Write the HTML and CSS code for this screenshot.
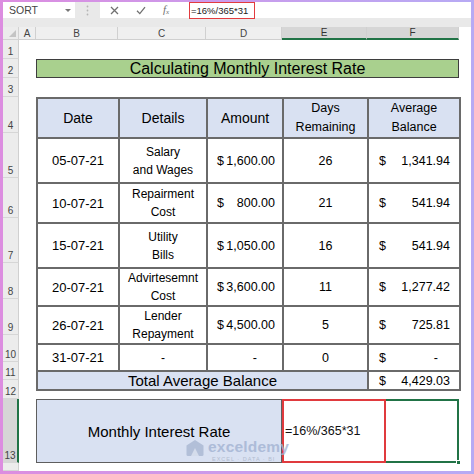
FILE: index.html
```html
<!DOCTYPE html>
<html lang="en">
<head>
<meta charset="utf-8">
<title>Calculating Monthly Interest Rate</title>
<link rel="stylesheet" href="styles.css">
</head>
<body>
<div class="frame">
  <div class="fbar">
    <div class="namebox"><span class="name">SORT</span><span class="caret"></span></div>
    <div class="grip">
      <svg width="3" height="11" viewBox="0 0 3 11"><circle cx="1.5" cy="1.5" r="0.9"/><circle cx="1.5" cy="5.5" r="0.9"/><circle cx="1.5" cy="9.5" r="0.9"/></svg>
    </div>
    <div class="finput">
      <div class="btns">
        <svg class="ic" width="9" height="9" viewBox="0 0 9 9"><path d="M1 1L8 8M8 1L1 8"/></svg>
        <svg class="ic" width="10" height="9" viewBox="0 0 10 9"><path d="M1 4.8L3.8 7.6L9 1.2"/></svg>
        <span class="fx"><i>f</i><sub>x</sub></span>
      </div>
      <div class="formula">=16%/365*31</div>
    </div>
  </div>

  <div class="sheet">
    <div class="corner"><span class="tri"></span></div>
    <div class="ch">A</div>
    <div class="ch">B</div>
    <div class="ch">C</div>
    <div class="ch">D</div>
    <div class="ch sel">E</div>
    <div class="ch sel">F</div>
    <div class="ch blank"></div>

    <div class="rh">1</div>
    <div class="rh">2</div>
    <div class="rh">3</div>
    <div class="rh">4</div>
    <div class="rh">5</div>
    <div class="rh">6</div>
    <div class="rh">7</div>
    <div class="rh">8</div>
    <div class="rh">9</div>
    <div class="rh">10</div>
    <div class="rh">11</div>
    <div class="rh">12</div>
    <div class="rh rsel">13</div>
    <div class="rh"></div>

    <div class="title">Calculating Monthly Interest Rate</div>

    <table class="data">
      <colgroup><col class="cb"><col class="cc"><col class="cd"><col class="ce"><col class="cf"></colgroup>
      <tr class="hd">
        <th>Date</th><th>Details</th><th>Amount</th>
        <th class="two">Days<br>Remaining</th><th class="two">Average<br>Balance</th>
      </tr>
      <tr class="r45">
        <td class="date">05-07-21</td><td class="det">Salary<br>and Wages</td>
        <td><div class="acc amt"><span>$</span><span>1,600.00</span></div></td>
        <td class="num">26</td>
        <td><div class="acc avg"><span>$</span><span>1,341.94</span></div></td>
      </tr>
      <tr class="r40">
        <td class="date">10-07-21</td><td class="det">Repairment<br>Cost</td>
        <td><div class="acc amt"><span>$</span><span>800.00</span></div></td>
        <td class="num">21</td>
        <td><div class="acc avg"><span>$</span><span>541.94</span></div></td>
      </tr>
      <tr class="r45">
        <td class="date">15-07-21</td><td class="det">Utility<br>Bills</td>
        <td><div class="acc amt"><span>$</span><span>1,050.00</span></div></td>
        <td class="num">16</td>
        <td><div class="acc avg"><span>$</span><span>541.94</span></div></td>
      </tr>
      <tr class="r36">
        <td class="date">20-07-21</td><td class="det">Advirtesemnt<br>Cost</td>
        <td><div class="acc amt"><span>$</span><span>3,600.00</span></div></td>
        <td class="num">11</td>
        <td><div class="acc avg"><span>$</span><span>1,277.42</span></div></td>
      </tr>
      <tr class="r36">
        <td class="date">26-07-21</td><td class="det">Lender<br>Repayment</td>
        <td><div class="acc amt"><span>$</span><span>4,500.00</span></div></td>
        <td class="num">5</td>
        <td><div class="acc avg"><span>$</span><span>725.81</span></div></td>
      </tr>
      <tr class="r27">
        <td class="date">31-07-21</td><td class="det">-</td>
        <td><div class="acc amt zero"><span></span><span>-</span></div></td>
        <td class="num">0</td>
        <td><div class="acc avg zero"><span>$</span><span>-</span></div></td>
      </tr>
      <tr class="r18">
        <td colspan="4" class="tot">Total Average Balance</td>
        <td class="totv"><div class="acc avg"><span>$</span><span>4,429.03</span></div></td>
      </tr>
    </table>

    <div class="bottom">
      <div class="label">Monthly Interest Rate</div>
      <div class="value">=16%/365*31<span class="handle"></span></div>
      <div class="redbox"></div>
    </div>
  </div>

  <div class="watermark">
    <svg class="wlogo" width="20" height="18" viewBox="0 0 20 18">
      <path d="M10 1L18.5 6.5V15.5Q18.5 17 17 17H3Q1.5 17 1.5 15.5V6.5Z"/>
      <path class="inner" d="M6 17L10 9L14 17Z"/>
    </svg>
    <div class="wtext">
      <span class="wname">exceldemy</span>
      <span class="wsub">EXCEL · DATA · BI</span>
    </div>
  </div>
</div>
</body>
</html>
```

FILE: styles.css
```css
* { box-sizing: border-box; margin: 0; padding: 0; }

html, body {
  width: 474px;
  height: 474px;
  overflow: hidden;
  background: #ffffff;
}

body {
  font-family: "Liberation Sans", Arial, sans-serif;
  color: #000;
}

.frame {
  position: relative;
  width: 474px;
  height: 474px;
  border-style: solid;
  border-width: 2px 3px 3px 3px;
  border-image: linear-gradient(90deg, #dc8de0, #c99cec 50%, #b7aaf4) 1;
  display: flex;
  flex-direction: column;
  background: #fff;
}

/* ---------- formula bar ---------- */
.fbar {
  height: 25px;
  flex: none;
  background: #e9e9e9;
  display: flex;
  align-items: flex-start;
}

.namebox {
  width: 72px;
  height: 16px;
  margin-top: 0;
  background: #fff;
  display: flex;
  align-items: center;
  justify-content: space-between;
  padding: 0 4px 0 6px;
}

.name {
  font-size: 10.5px;
  color: #444;
}

.caret {
  width: 0;
  height: 0;
  border-left: 3px solid transparent;
  border-right: 3px solid transparent;
  border-top: 3px solid #777;
}

.grip {
  width: 25px;
  height: 16px;
  display: flex;
  align-items: center;
  justify-content: center;
}

.grip svg { fill: #b5b5b5; }

.finput {
  flex: 1;
  height: 16px;
  background: #fff;
  display: flex;
  align-items: stretch;
}

.btns {
  width: 86px;
  display: flex;
  align-items: center;
  padding-left: 10px;
  gap: 17px;
}

.ic {
  fill: none;
  stroke: #707070;
  stroke-width: 1.3;
}

.fx {
  font-family: "Liberation Serif", serif;
  font-size: 11px;
  color: #707070;
  line-height: 1;
}

.fx sub { font-size: 7px; font-style: italic; vertical-align: -1px; }

.formula {
  margin-left: 3px;
  width: 66px;
  height: 17px;
  border: 1.5px solid #e23b3f;
  font-size: 9.5px;
  color: #222;
  display: flex;
  align-items: center;
  padding-left: 1px;
}

/* ---------- sheet grid ---------- */
.sheet {
  flex: 1;
  display: grid;
  grid-template-columns: 16px 17px 82px 88px 76px 85px 92px 12px;
  grid-template-rows: 13px 19px 19px 19px 36px 45px 40px 45px 36px 36px 27px 18px 19px 64px 8px;
}

.corner {
  background: #ececec;
  border-right: 1px solid #d2d2d2;
  border-bottom: 1px solid #d2d2d2;
  position: relative;
}

.tri {
  position: absolute;
  right: 2px;
  bottom: 2px;
  width: 0;
  height: 0;
  border-left: 7px solid transparent;
  border-bottom: 7px solid #c4c4c4;
}

.ch {
  background: #efefef;
  border-right: 1px solid #d0d0d0;
  border-bottom: 1px solid #cfcfcf;
  font-size: 10px;
  color: #444;
  display: flex;
  align-items: center;
  justify-content: center;
}

.ch.sel {
  background: #d6d6d6;
  border-bottom: 2px solid #217346;
  color: #333;
}

.ch.blank {
  background: #fff;
  border-right: none;
  border-bottom: none;
}

.rh {
  grid-column: 1;
  background: #ececec;
  border-right: 1px solid #d0d0d0;
  border-bottom: 1px solid #d6d6d6;
  font-size: 10px;
  color: #444;
  display: flex;
  align-items: flex-end;
  justify-content: center;
  padding-bottom: 1px;
  line-height: 1;
}

.rh.rsel {
  background: #d6d6d6;
  border-right: 2px solid #217346;
}

.title {
  grid-column: 3 / 8;
  grid-row: 3;
  background: #a9d08e;
  border: 1px solid #3e3e3e;
  font-size: 16px;
  display: flex;
  align-items: center;
  justify-content: center;
}

/* ---------- data table ---------- */
.data {
  grid-column: 3 / 8;
  grid-row: 5 / 13;
  width: 423px;
  height: 283px;
  border-collapse: collapse;
  table-layout: fixed;
}

.cb { width: 82px; }
.cc { width: 88px; }
.cd { width: 76px; }
.ce { width: 85px; }
.cf { width: 92px; }

.data th,
.data td {
  border: 2px solid #6a6a6a;
  padding: 0;
  text-align: center;
  vertical-align: middle;
  font-weight: normal;
}

.data th {
  background: #d9e1f2;
  font-size: 14px;
}

.data th.two {
  font-size: 12.5px;
  line-height: 19px;
}

.hd { height: 36px; }
.r45 { height: 45px; }
.r40 { height: 40px; }
.r36 { height: 36px; }
.r27 { height: 27px; }
.r18 { height: 18px; }

.date { font-size: 13px; }

.det {
  font-size: 12px;
  line-height: 18px;
}

.num { font-size: 12.5px; }

.acc {
  display: flex;
  justify-content: space-between;
  font-size: 12.5px;
}

.amt { padding: 0 7px 0 9px; }
.avg { padding: 0 9px 0 10px; }
.amt.zero { padding-right: 25px; }
.avg.zero { padding-right: 21px; }

.tot {
  background: #d9e1f2;
  font-size: 15px;
}

/* ---------- bottom row ---------- */
.bottom {
  grid-column: 3 / 8;
  grid-row: 14;
  display: grid;
  grid-template-columns: 246px 177px;
  position: relative;
}

.label {
  background: #d9e1f2;
  border: 1.5px solid #5e5e5e;
  font-size: 15px;
  display: flex;
  align-items: center;
  justify-content: center;
}

.value {
  position: relative;
  border: 2px solid #217346;
  font-size: 12.5px;
  color: #111;
  display: flex;
  align-items: center;
  padding-left: 1px;
}

.handle {
  position: absolute;
  right: -4px;
  bottom: -4px;
  width: 5px;
  height: 5px;
  background: #217346;
  border: 1px solid #fff;
}

.redbox {
  position: absolute;
  left: 246px;
  top: 0;
  width: 104px;
  height: 64px;
  border: 2px solid #e03a3e;
}

/* ---------- watermark ---------- */
.watermark {
  position: absolute;
  left: 182px;
  top: 437px;
  display: flex;
  align-items: flex-start;
  gap: 3px;
  opacity: 0.8;
  pointer-events: none;
}

.wlogo path { fill: #a9b7d2; }
.wlogo path.inner { fill: #d3dbea; }

.wtext {
  display: flex;
  flex-direction: column;
  line-height: 1;
}

.wname {
  font-size: 15.5px;
  font-weight: bold;
  color: #a3b3d2;
  letter-spacing: 0.2px;
}

.wsub {
  font-size: 5.5px;
  color: #aab4c8;
  letter-spacing: 1px;
  margin-top: 2px;
  padding-left: 4px;
}
```
